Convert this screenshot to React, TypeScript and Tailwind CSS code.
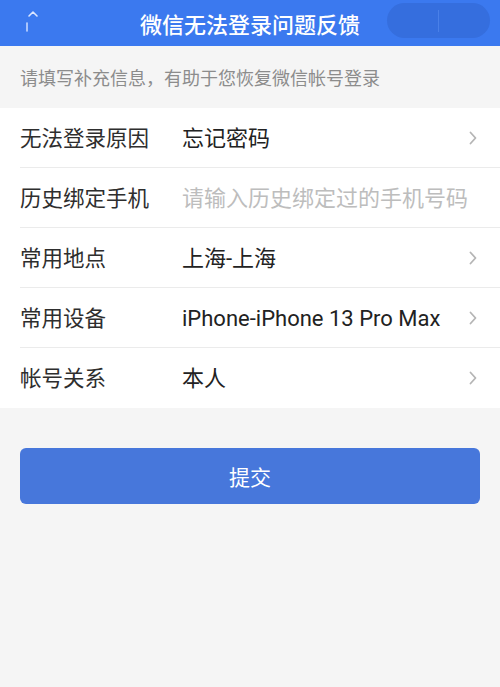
import React from 'react';

const ROWS = [
  { label: '无法登录原因', value: '忘记密码', arrow: true },
  { label: '历史绑定手机', value: '请输入历史绑定过的手机号码', placeholder: true },
  { label: '常用地点', value: '上海-上海', arrow: true },
  { label: '常用设备', value: 'iPhone-iPhone 13 Pro Max', arrow: true },
  { label: '帐号关系', value: '本人', arrow: true },
];

const Chevron: React.FC = () => (
  <svg width="10" height="16" viewBox="0 0 10 16" className="shrink-0">
    <path d="M2.5 2.5 L7.5 8 L2.5 13.5" fill="none" stroke="#b5b5b5" strokeWidth="1.8" strokeLinecap="round" strokeLinejoin="round" />
  </svg>
);

const App: React.FC = () => {
  return (
    <div
      className="w-[500px] h-[687px] bg-[#f5f5f5] flex flex-col overflow-hidden"
      style={{ fontFamily: '"Noto Sans CJK SC", "Noto Sans", sans-serif' }}
    >
      {/* header */}
      <div className="h-[46px] bg-[#3b79ef] flex items-center relative shrink-0">
        <svg width="20" height="30" viewBox="0 0 20 30" className="absolute left-[24px] top-[6px]">
          <path d="M5 10 L9 6 L13 10" fill="none" stroke="#dbe6ff" strokeWidth="1.6" strokeLinecap="round" strokeLinejoin="round" />
          <path d="M3 17 L3 25" fill="none" stroke="#c6d8ff" strokeWidth="1.6" strokeLinecap="round" />
        </svg>
        <h1 className="flex-1 text-center text-white text-[22px] font-medium leading-none">
          微信无法登录问题反馈
        </h1>
        <div className="absolute right-[10px] top-[3px] w-[103px] h-[35px] rounded-full bg-[#356ede] flex items-center">
          <div className="flex-1" />
          <div className="w-px h-[22px] bg-[#4a80e8]" />
          <div className="flex-1" />
        </div>
      </div>

      {/* tip */}
      <div className="h-[62px] flex items-center px-[20px] shrink-0">
        <p className="text-[18px] leading-none text-[#8c8c8c]">请填写补充信息，有助于您恢复微信帐号登录</p>
      </div>

      {/* form */}
      <div className="bg-white pl-[20px] shrink-0">
        {ROWS.map((row, i) => (
          <div
            key={row.label}
            className={`h-[60px] flex items-center pr-[22px] ${i < ROWS.length - 1 ? 'border-b border-[#ebebeb]' : ''}`}
          >
            <div className="flex-1 flex items-baseline">
              <span className="w-[162px] text-[21.5px] leading-[30px] text-[#2e2e2e]">{row.label}</span>
              <span
                className={`flex-1 text-[22px] leading-[30px] whitespace-nowrap font-['Roboto','Noto_Sans_CJK_SC',sans-serif] ${row.placeholder ? 'text-[#bdbdbd]' : 'text-[#222]'}`}
              >
                {row.value}
              </span>
            </div>
            {row.arrow && <Chevron />}
          </div>
        ))}
      </div>

      {/* submit */}
      <div className="px-[20px] pt-[40px]">
        <button className="w-full h-[56px] rounded-[6px] bg-[#4777db] text-white text-[21px] leading-none">
          提交
        </button>
      </div>
    </div>
  );
};

export default App;
